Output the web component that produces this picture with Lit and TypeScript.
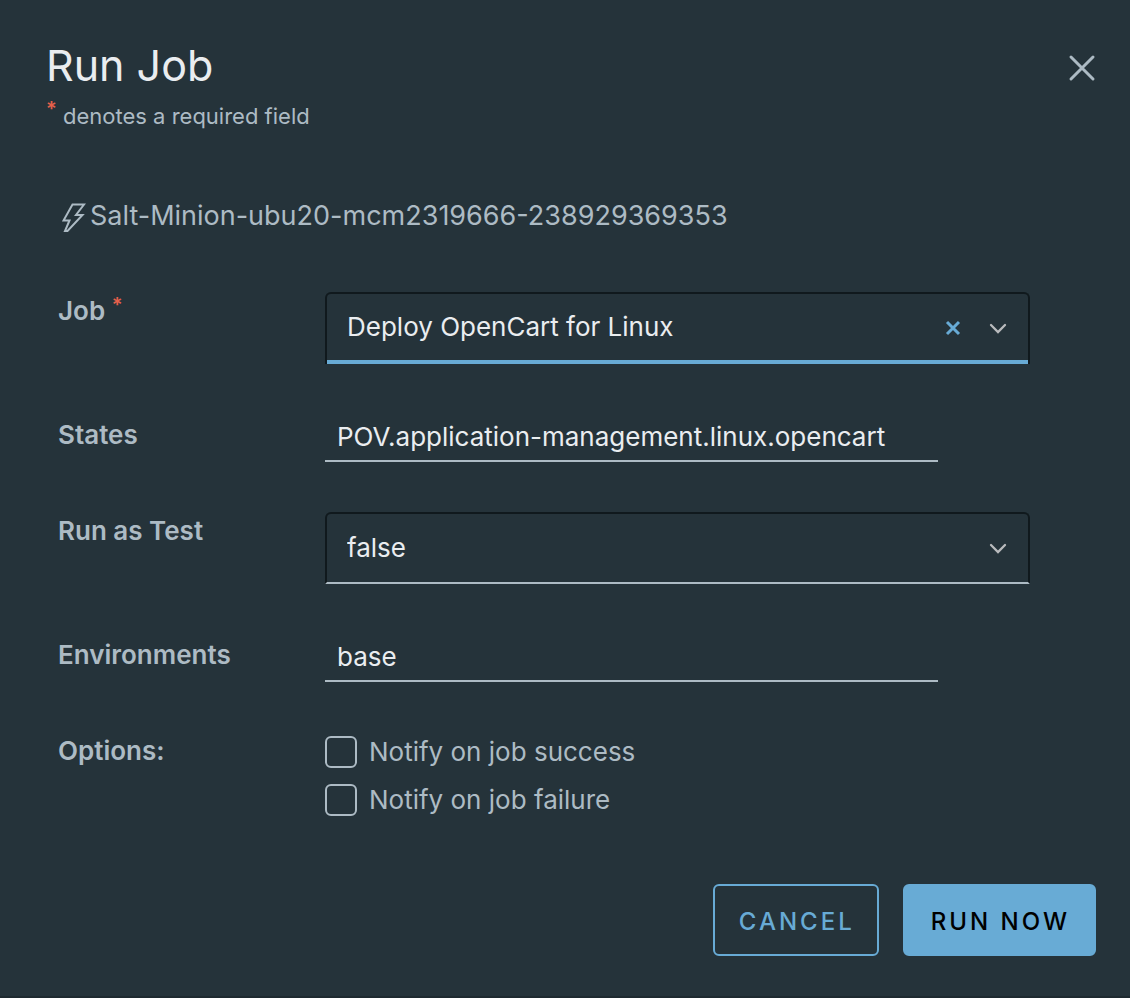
import { LitElement, html, css, svg } from "lit";
import { customElement, state } from "lit/decorators.js";

const chevron = svg`<svg class="chevron" viewBox="0 0 18 12" aria-hidden="true"><path d="M2 2 L9 9 L16 2"/></svg>`;

@customElement("app-root")
export class AppRoot extends LitElement {
  @state() private job = "opencart";

  static styles = css`
    :host {
      display: block;
      --bg: #25333a;
      --text: #adbbc4;
      --bright: #eaedf0;
      --accent: #68abd5;
      --edge: #10191d;
      --danger: #e5604b;
      font-family: Inter, "Open Sans", sans-serif;
      font-size: 26px;
      line-height: 32px;
      color: var(--text);
    }
    * { box-sizing: border-box; }
    button, input, select { font: inherit; margin: 0; }
    .dialog {
      min-height: 100vh;
      padding: 36px 34px 40px 46px;
      background: var(--bg);
      border-bottom: 2px solid #1e2a30;
      display: flex;
      flex-direction: column;
    }
    header { display: flex; justify-content: space-between; align-items: flex-start; }
    h1 { margin: 0; font-size: 43px; line-height: 58px; font-weight: 400; color: var(--bright); }
    .hint { margin: 6px 0 0; font-size: 22px; line-height: 32px; display: flex; }
    .hint .star { width: 17px; line-height: 18px; }
    .star { color: var(--danger); font-size: 20px; font-weight: 600; }
    .name .star { line-height: 0; vertical-align: 8px; }
    .close {
      width: 28px; height: 28px; margin-top: 18px; padding: 0;
      border: 0; background: none; color: var(--text); cursor: pointer;
    }
    svg { display: block; fill: none; stroke: currentColor; }
    .close svg { width: 28px; height: 28px; stroke-width: 3; stroke-linecap: round; }
    form { flex: 1; display: flex; flex-direction: column; }
    .target {
      margin: 68px 0 60px; padding-left: 16px; font-size: 27px;
      display: flex; align-items: center;
    }
    .target svg { width: 24px; height: 32px; margin-right: 4px; stroke-width: 2; }
    .fields { padding: 0 66px 0 12px; display: grid; row-gap: 48px; }
    .row { display: grid; grid-template-columns: 252px minmax(0, 1fr); column-gap: 15px; align-items: start; }
    .name { font-weight: 600; padding-top: 3px; }
    .row.text .name { padding-top: 7px; }
    .picker { display: grid; align-items: center; grid-template-columns: minmax(0, 1fr) 36px 49px; }
    select {
      grid-area: 1 / 1 / 2 / 4;
      appearance: none;
      width: 100%; height: 72px; padding: 0 96px 0 20px;
      color: var(--bright); background: transparent;
      border: 2px solid var(--edge); border-bottom-color: var(--text);
      border-radius: 6px 6px 0 0; outline: none;
    }
    select.active { border-bottom: 0; padding-bottom: 4px; box-shadow: inset 0 -4px var(--accent); }
    option { background: var(--bg); }
    .chevron { grid-area: 1 / 3; width: 18px; height: 12px; margin: 2px 0 0 8px; stroke: #b9bbbd; stroke-width: 2.3; stroke-linecap: round; pointer-events: none; }
    .clear {
      grid-area: 1 / 2; width: 18px; height: 18px; padding: 0;
      border: 0; background: none; color: var(--accent); cursor: pointer;
    }
    .clear svg { width: 16px; height: 18px; stroke-width: 3; }
    .row.text { min-height: 52px; }
    .entry {
      width: 87%; height: 50px; padding: 0 47px 0 12px;
      color: var(--bright); background: transparent;
      border: 0; border-bottom: 2px solid var(--text); border-radius: 0; outline: none;
    }
    .checks { padding-top: 4px; display: grid; row-gap: 16px; }
    .check { display: flex; align-items: center; gap: 12px; }
    .check input {
      appearance: none; width: 32px; height: 32px;
      border: 2px solid var(--text); border-radius: 6px;
    }
    .check input:checked { background: var(--accent); }
    footer { margin-top: auto; padding-top: 32px; display: flex; justify-content: flex-end; gap: 24px; }
    .action {
      height: 72px; padding: 4px 22px 0 24px; border: 2px solid var(--accent); border-radius: 6px;
      font-size: 24px; font-weight: 500; letter-spacing: 3px; text-transform: uppercase;
      color: var(--accent); background: transparent; cursor: pointer;
    }
    .action.primary { padding: 4px 24px 0 26px; color: #000; background: var(--accent); }
  `;

  private textRow(id: string, name: string, value: string) {
    return html`<div class="row text">
      <label class="name" for=${id}>${name}</label>
      <input class="entry" id=${id} type="text" spellcheck="false" .value=${value} />
    </div>`;
  }

  render() {
    return html`
      <section class="dialog" role="dialog" aria-labelledby="title">
        <header>
          <div>
            <h1 id="title">Run Job</h1>
            <p class="hint"><span class="star">*</span>denotes a required field</p>
          </div>
          <button class="close" type="button" aria-label="Close">
            <svg viewBox="0 0 28 28"><path d="M3 3 L25 25 M25 3 L3 25"/></svg>
          </button>
        </header>
        <form @submit=${(e: Event) => e.preventDefault()}>
          <div class="target">
            <svg viewBox="0 0 24 32" aria-hidden="true"><path d="M10.5 4.5 H22 L14 15 H20.5 L5.5 31 H3 L7.5 20.5 H1.5 Z"/></svg>
            <span>Salt-Minion-ubu20-mcm2319666-238929369353</span>
          </div>
          <div class="fields">
            <div class="row">
              <label class="name" for="job">Job <span class="star">*</span></label>
              <div class="picker">
                <select class="active" id="job" required .value=${this.job}
                  @change=${(e: Event) => (this.job = (e.target as HTMLSelectElement).value)}>
                  <option value="opencart">Deploy OpenCart for Linux</option>
                  <option value=""></option>
                </select>
                <button class="clear" type="button" aria-label="Clear job" @click=${() => (this.job = "")}>
                  <svg viewBox="0 0 16 18"><path d="M2 3 L14 15 M14 3 L2 15"/></svg>
                </button>
                ${chevron}
              </div>
            </div>
            ${this.textRow("states", "States", "POV.application-management.linux.opencart")}
            <div class="row">
              <label class="name" for="test">Run as Test</label>
              <div class="picker">
                <select id="test"><option>false</option><option>true</option></select>
                ${chevron}
              </div>
            </div>
            ${this.textRow("environments", "Environments", "base")}
            <div class="row" role="group" aria-labelledby="options">
              <span class="name" id="options">Options:</span>
              <div class="checks">
                <label class="check"><input type="checkbox" />Notify on job success</label>
                <label class="check"><input type="checkbox" />Notify on job failure</label>
              </div>
            </div>
          </div>
          <footer>
            <button class="action" type="button">Cancel</button>
            <button class="action primary" type="submit">Run now</button>
          </footer>
        </form>
      </section>
    `;
  }
}
